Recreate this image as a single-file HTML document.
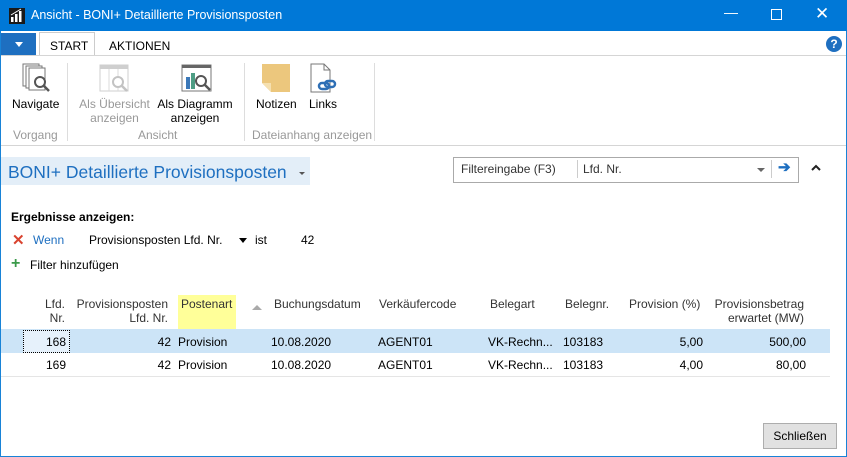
<!DOCTYPE html>
<html><head><style>
body{margin:0;width:847px;height:457px;overflow:hidden;font-family:"Liberation Sans",sans-serif;font-size:12px;color:#000;background:#fff;position:relative}
.a{position:absolute;white-space:nowrap}
.g{color:#999}
.r{text-align:right}
</style></head><body>
<div class="a" style="left:0;top:0;width:847px;height:457px;box-sizing:border-box;border:1px solid #1883d7"></div>
<div class="a" style="left:0;top:0;width:847px;height:31px;background:#0078d7"></div>
<svg class="a" style="left:9px;top:8px" width="16" height="16"><rect width="16" height="16" fill="#1a1a1a"/><rect x="2" y="9" width="2.5" height="5" fill="#fff"/><rect x="6" y="6" width="2.5" height="8" fill="#fff"/><rect x="10" y="3" width="2.5" height="11" fill="#fff"/><path d="M2 7 L12 1" stroke="#fff"/></svg>
<div class="a" style="left:31px;top:8px;color:#fff;font-size:12.5px">Ansicht - BONI+ Detaillierte Provisionsposten</div>
<div class="a" style="left:724px;top:4px;color:#fff;font-size:14px">—</div>
<div class="a" style="left:771px;top:9px;width:9px;height:9px;border:1px solid #fff"></div>
<div class="a" style="left:815px;top:4px;color:#fff;font-size:17px">✕</div>
<div class="a" style="left:1px;top:33px;width:35px;height:22px;background:#1e6fc0"></div>
<div class="a" style="left:15px;top:42px;border:4px solid transparent;border-top:5px solid #fff;border-bottom:0"></div>
<div class="a" style="left:39px;top:32px;width:54px;height:23px;border:1px solid #ccc;border-bottom:none;background:#fff"></div>
<div class="a" style="left:50px;top:39px">START</div>
<div class="a" style="left:109px;top:39px">AKTIONEN</div>
<div class="a" style="left:826px;top:36px;width:16px;height:16px;border-radius:50%;background:#1e6fc0;color:#fff;font-weight:bold;font-size:12px;text-align:center;line-height:16px">?</div>
<div class="a" style="left:1px;top:55px;width:845px;height:1px;background:#d5d5d5"></div>
<div class="a" style="left:1px;top:145px;width:845px;height:1px;background:#d5d5d5"></div>
<svg class="a" style="left:22px;top:63px" width="32" height="30"><rect x="1" y="1" width="16" height="22" fill="#fff" stroke="#777"/><rect x="4" y="3" width="16" height="22" fill="#fff" stroke="#777"/><rect x="7" y="5" width="16" height="22" fill="#fff" stroke="#777"/><circle cx="18" cy="19" r="5" fill="#fff" stroke="#555" stroke-width="2"/><path d="M22 23 L27 28" stroke="#555" stroke-width="2.5"/></svg>
<svg class="a" style="left:99px;top:64px" width="32" height="30" opacity="0.35"><rect x="1" y="1" width="28" height="26" fill="#fff" stroke="#777"/><rect x="1" y="1" width="28" height="4" fill="#777"/><path d="M10 5V27M19 5V27" stroke="#999"/><circle cx="19" cy="18" r="5" fill="#fff" stroke="#555" stroke-width="2"/><path d="M23 22 L28 27" stroke="#555" stroke-width="2.5"/></svg>
<svg class="a" style="left:181px;top:64px" width="32" height="30"><rect x="1" y="1" width="29" height="26" fill="#fff" stroke="#777"/><rect x="1" y="1" width="29" height="3" fill="#666"/><rect x="5" y="13" width="4" height="12" fill="#3b78b8"/><rect x="10" y="9" width="4" height="16" fill="#4e9d84"/><circle cx="20" cy="17" r="5" fill="#fff" stroke="#555" stroke-width="2"/><path d="M24 21 L29 26" stroke="#555" stroke-width="2.5"/></svg>
<svg class="a" style="left:261px;top:63px" width="30" height="30"><path d="M1 1H29V29H10L1 20Z" fill="#ecc77d"/><path d="M1 20H10V29" fill="#f5e0b0"/></svg>
<svg class="a" style="left:310px;top:63px" width="30" height="30"><path d="M1 1H14L20 7V29H1Z" fill="#fff" stroke="#777"/><path d="M14 1V7H20" fill="none" stroke="#777"/><rect x="9" y="20" width="10" height="6" rx="3" fill="none" stroke="#2e6fb5" stroke-width="2.5"/><rect x="15" y="18" width="10" height="6" rx="3" fill="none" stroke="#2e6fb5" stroke-width="2.5"/></svg>
<div class="a" style="left:12px;top:97px">Navigate</div>
<div class="a g" style="left:79px;top:97px;text-align:center;width:71px;line-height:14px">Als Übersicht<br>anzeigen</div>
<div class="a" style="left:157px;top:97px;text-align:center;width:76px;line-height:14px">Als Diagramm<br>anzeigen</div>
<div class="a" style="left:256px;top:97px">Notizen</div>
<div class="a" style="left:309px;top:97px">Links</div>
<div class="a g" style="left:13px;top:128px">Vorgang</div>
<div class="a g" style="left:138px;top:128px">Ansicht</div>
<div class="a g" style="left:252px;top:128px">Dateianhang anzeigen</div>
<div class="a" style="left:67px;top:63px;width:1px;height:78px;background:#ddd"></div>
<div class="a" style="left:244px;top:63px;width:1px;height:78px;background:#ddd"></div>
<div class="a" style="left:374px;top:63px;width:1px;height:78px;background:#ddd"></div>
<div class="a" style="left:1px;top:157px;width:309px;height:28px;background:#e3eef8"></div>
<div class="a" style="left:8px;top:162px;font-size:17.5px;color:#1e6fc0">BONI+ Detaillierte Provisionsposten</div>
<div class="a" style="left:299px;top:172px;border:3px solid transparent;border-top:3px solid #555;border-bottom:0"></div>
<div class="a" style="left:453px;top:157px;width:344px;height:24px;border:1px solid #aaa"></div>
<div class="a" style="left:461px;top:162px;color:#333">Filtereingabe (F3)</div>
<div class="a" style="left:577px;top:160px;width:1px;height:18px;background:#ccc"></div>
<div class="a" style="left:583px;top:162px;color:#333">Lfd. Nr.</div>
<div class="a" style="left:757px;top:168px;border:4px solid transparent;border-top:4px solid #666;border-bottom:0"></div>
<div class="a" style="left:771px;top:160px;width:1px;height:18px;background:#ccc"></div>
<div class="a" style="left:778px;top:158px;color:#1e6fc0;font-size:15px;font-weight:bold">➔</div>
<svg class="a" style="left:810px;top:164px" width="12" height="8"><path d="M2 6 L6 2 L10 6" fill="none" stroke="#222" stroke-width="2"/></svg>
<div class="a" style="left:11px;top:210px;font-weight:bold">Ergebnisse anzeigen:</div>
<div class="a" style="left:12px;top:231px;color:#d9432f;font-size:15px;font-weight:bold">✕</div>
<div class="a" style="left:33px;top:233px;color:#1e6fc0">Wenn</div>
<div class="a" style="left:89px;top:233px">Provisionsposten Lfd. Nr.</div>
<div class="a" style="left:239px;top:238px;border:4px solid transparent;border-top:5px solid #000;border-bottom:0"></div>
<div class="a" style="left:255px;top:233px">ist</div>
<div class="a" style="left:301px;top:233px">42</div>
<div class="a" style="left:11px;top:255px;color:#3a9a4a;font-size:16px;font-weight:bold">+</div>
<div class="a" style="left:30px;top:258px">Filter hinzufügen</div>
<div class="a" style="left:178px;top:295px;width:58px;height:34px;background:#ffff99"></div>
<div class="a r" style="left:30px;top:297px;width:35px;line-height:14px;color:#333">Lfd.<br>Nr.</div>
<div class="a r" style="left:70px;top:297px;width:98px;line-height:14px;color:#333">Provisionsposten<br>Lfd. Nr.</div>
<div class="a" style="left:181px;top:297px;color:#333">Postenart</div>
<div class="a" style="left:252px;top:305px;border:5px solid transparent;border-bottom:5px solid #aaa;border-top:0"></div>
<div class="a" style="left:274px;top:297px;color:#333">Buchungsdatum</div>
<div class="a" style="left:379px;top:297px;color:#333">Verkäufercode</div>
<div class="a" style="left:490px;top:297px;color:#333">Belegart</div>
<div class="a" style="left:565px;top:297px;color:#333">Belegnr.</div>
<div class="a" style="left:629px;top:297px;color:#333">Provision (%)</div>
<div class="a r" style="left:700px;top:297px;width:104px;line-height:14px;color:#333">Provisionsbetrag<br>erwartet (MW)</div>
<div class="a" style="left:1px;top:329px;width:829px;height:24px;background:#cce4f7"></div>
<div class="a" style="left:23px;top:330px;width:45px;height:21px;border:1px dotted #000;background:#e6f1fb"></div>
<div class="a" style="left:1px;top:376px;width:829px;height:1px;background:#e5e5e5"></div>
<div class="a r" style="left:30px;top:335px;width:36px">168</div>
<div class="a r" style="left:120px;top:335px;width:51px">42</div>
<div class="a" style="left:178px;top:335px">Provision</div>
<div class="a" style="left:271px;top:335px">10.08.2020</div>
<div class="a" style="left:378px;top:335px">AGENT01</div>
<div class="a" style="left:488px;top:335px">VK-Rechn...</div>
<div class="a" style="left:563px;top:335px">103183</div>
<div class="a r" style="left:640px;top:335px;width:63px">5,00</div>
<div class="a r" style="left:720px;top:335px;width:86px">500,00</div>
<div class="a r" style="left:30px;top:358px;width:36px">169</div>
<div class="a r" style="left:120px;top:358px;width:51px">42</div>
<div class="a" style="left:178px;top:358px">Provision</div>
<div class="a" style="left:271px;top:358px">10.08.2020</div>
<div class="a" style="left:378px;top:358px">AGENT01</div>
<div class="a" style="left:488px;top:358px">VK-Rechn...</div>
<div class="a" style="left:563px;top:358px">103183</div>
<div class="a r" style="left:640px;top:358px;width:63px">4,00</div>
<div class="a r" style="left:720px;top:358px;width:86px">80,00</div>
<div class="a" style="left:763px;top:423px;width:72px;height:24px;border:1px solid #adadad;background:#e1e1e1;text-align:center;line-height:24px">Schließen</div>
</body></html>
